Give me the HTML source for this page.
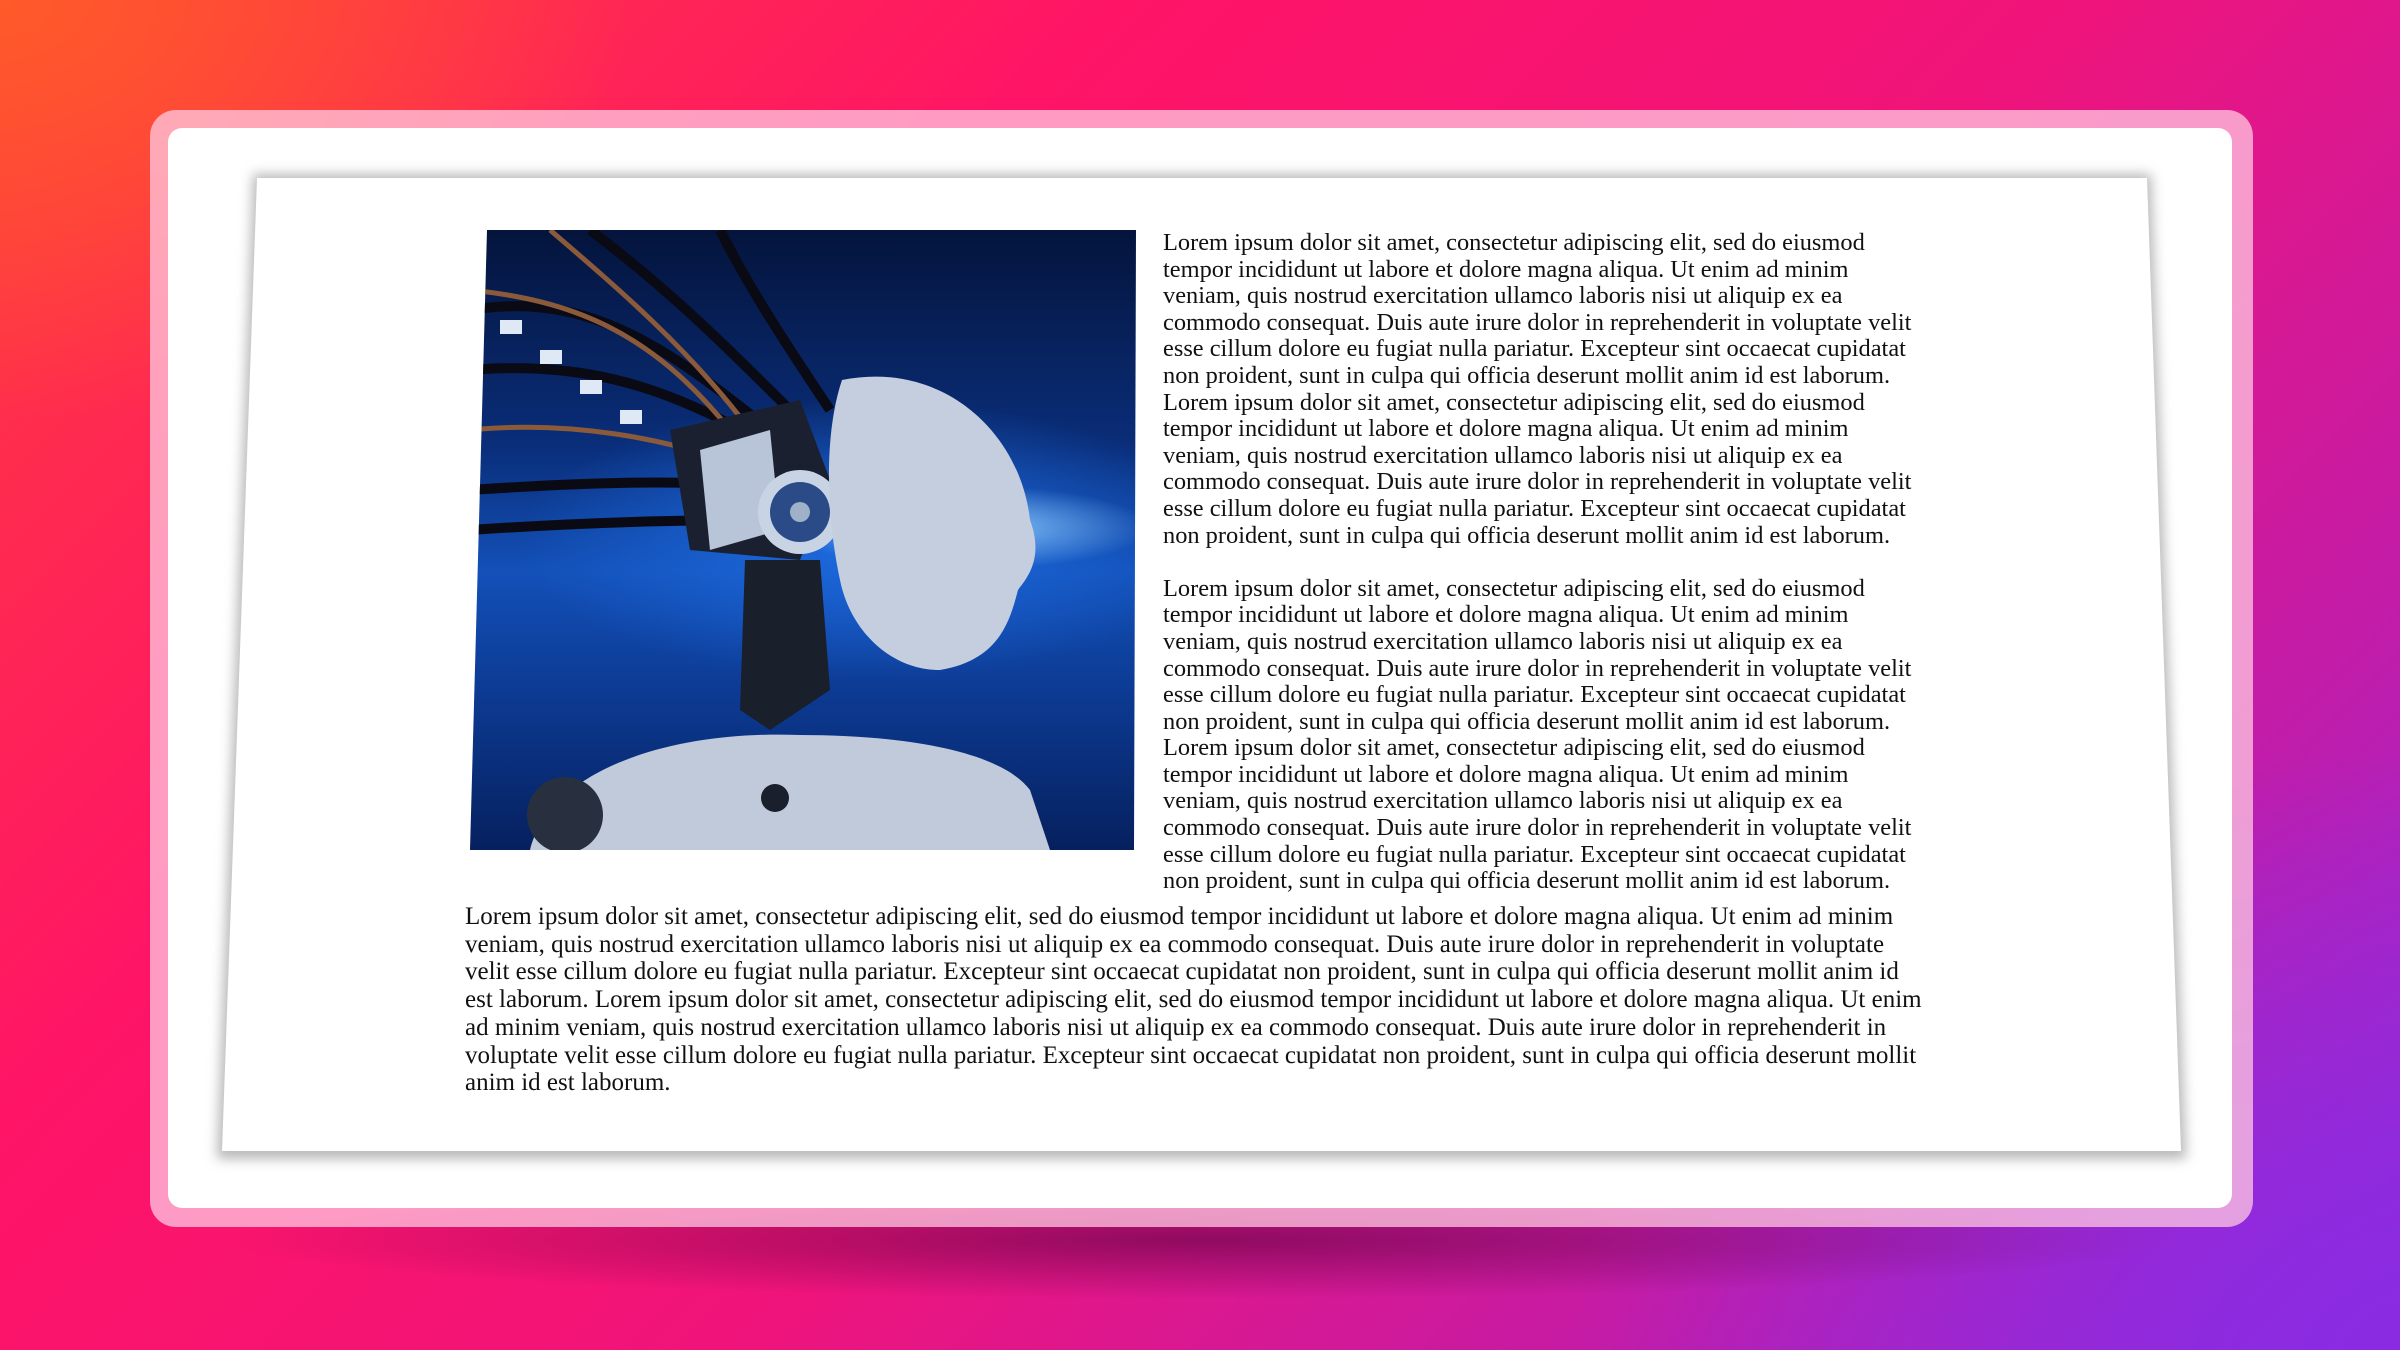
<!DOCTYPE html>
<html><head><meta charset="utf-8"><style>
html,body{margin:0;padding:0}
body{width:2400px;height:1350px;overflow:hidden;position:relative;
background:
radial-gradient(ellipse 900px 600px at 0% 0%,#ff5a2a 0%,rgba(255,60,60,0) 70%),
radial-gradient(ellipse 1100px 800px at 100% 100%,#8a2be2 0%,rgba(138,43,226,0) 75%),
linear-gradient(135deg,#ff3d3d 0%,#ff1466 30%,#f0147a 55%,#c21ca8 80%,#8e2ce0 100%);
font-family:"Liberation Serif",serif;}
.shadow{position:absolute;left:220px;top:1180px;width:1960px;height:120px;border-radius:50%;
background:radial-gradient(ellipse at center,rgba(80,0,60,.55),rgba(80,0,60,0) 70%);}
.frame{position:absolute;left:150px;top:110px;width:2103px;height:1117px;border-radius:26px;
background:rgba(255,200,225,.75);}
.inner{position:absolute;left:168px;top:128px;width:2064px;height:1080px;border-radius:14px;background:#fff;}
.pwrap{position:absolute;left:200px;top:170px;width:2000px;height:1000px;filter:blur(6px);}
.paper{position:absolute;left:0;top:0;width:2000px;height:1000px;background:#b8b8b8;
clip-path:polygon(53px 4px,1951px 4px,1986px 989px,17px 989px);}
.paperw{position:absolute;left:200px;top:170px;width:2000px;height:1000px;background:#fff;
clip-path:polygon(57px 8px,1947px 8px,1981px 981px,22px 981px);}
.img{position:absolute;left:470px;top:230px;width:666px;height:620px;
clip-path:polygon(17px 0,666px 0,664px 620px,0 620px);overflow:hidden;
background:
radial-gradient(ellipse 260px 60px at 75% 48%,rgba(150,210,255,.9),rgba(40,110,220,0) 70%),
radial-gradient(ellipse 500px 200px at 60% 50%,#1d6be0,rgba(20,80,200,0) 70%),
linear-gradient(180deg,#04143c 0%,#0a2e7a 35%,#1350b8 55%,#0c3a92 75%,#06205e 100%);}
.txt{position:absolute;color:#111;white-space:nowrap;}
.r{left:1163px;top:230px;line-height:26.6px;font-size:24.4px}
.b{left:465px;top:903px;line-height:27.7px;font-size:25px}
</style></head><body>
<div class="shadow"></div>
<div class="frame"></div>
<div class="inner"></div>
<div class="pwrap"><div class="paper"></div></div>
<div class="paperw"></div>
<div class="img">
<svg width="666" height="620" viewBox="0 0 666 620">
<g stroke="#0a0a14" stroke-width="10" fill="none">
<path d="M0 80 C120 60 200 120 300 200"/><path d="M0 140 C120 130 200 160 290 210"/>
<path d="M0 260 C150 250 250 250 300 260"/><path d="M0 300 C150 290 250 290 300 290"/>
<path d="M120 0 C200 60 260 120 330 190"/><path d="M250 0 C280 60 320 120 360 180"/>
</g>
<g stroke="#8a5a3a" stroke-width="5" fill="none">
<path d="M0 60 C100 70 180 100 260 200"/><path d="M0 200 C100 190 200 210 250 230"/><path d="M80 0 C150 60 220 120 280 200"/>
</g>
<g fill="#dfe8f5"><rect x="30" y="90" width="22" height="14"/><rect x="70" y="120" width="22" height="14"/><rect x="110" y="150" width="22" height="14"/><rect x="150" y="180" width="22" height="14"/></g>
<path d="M200 200 L330 170 L360 250 L330 330 L220 320 Z" fill="#1a2030"/>
<path d="M230 220 L300 200 L310 300 L240 320 Z" fill="#b8c4d8"/>
<circle cx="330" cy="282" r="42" fill="#c8d4e4"/><circle cx="330" cy="282" r="30" fill="#2a4a88"/><circle cx="330" cy="282" r="10" fill="#9fb0c8"/>
<path d="M275 330 L350 330 L360 460 L300 500 L270 480 Z" fill="#1a1f2c"/>
<path d="M372 150 C470 130 550 200 560 290 C575 330 555 350 548 360 C540 390 530 430 470 440 C420 440 380 400 370 350 C355 280 355 200 372 150 Z" fill="#c5cede"/>
<path d="M60 620 C80 540 200 500 330 505 C430 505 530 520 560 560 L580 620 Z" fill="#c0cadb"/>
<circle cx="95" cy="585" r="38" fill="#283040"/><circle cx="305" cy="568" r="14" fill="#1a1f2c"/>
</svg>
</div>
<div class="txt r">Lorem ipsum dolor sit amet, consectetur adipiscing elit, sed do eiusmod<br>tempor incididunt ut labore et dolore magna aliqua. Ut enim ad minim<br>veniam, quis nostrud exercitation ullamco laboris nisi ut aliquip ex ea<br>commodo consequat. Duis aute irure dolor in reprehenderit in voluptate velit<br>esse cillum dolore eu fugiat nulla pariatur. Excepteur sint occaecat cupidatat<br>non proident, sunt in culpa qui officia deserunt mollit anim id est laborum.<br>Lorem ipsum dolor sit amet, consectetur adipiscing elit, sed do eiusmod<br>tempor incididunt ut labore et dolore magna aliqua. Ut enim ad minim<br>veniam, quis nostrud exercitation ullamco laboris nisi ut aliquip ex ea<br>commodo consequat. Duis aute irure dolor in reprehenderit in voluptate velit<br>esse cillum dolore eu fugiat nulla pariatur. Excepteur sint occaecat cupidatat<br>non proident, sunt in culpa qui officia deserunt mollit anim id est laborum.<br>&nbsp;<br>Lorem ipsum dolor sit amet, consectetur adipiscing elit, sed do eiusmod<br>tempor incididunt ut labore et dolore magna aliqua. Ut enim ad minim<br>veniam, quis nostrud exercitation ullamco laboris nisi ut aliquip ex ea<br>commodo consequat. Duis aute irure dolor in reprehenderit in voluptate velit<br>esse cillum dolore eu fugiat nulla pariatur. Excepteur sint occaecat cupidatat<br>non proident, sunt in culpa qui officia deserunt mollit anim id est laborum.<br>Lorem ipsum dolor sit amet, consectetur adipiscing elit, sed do eiusmod<br>tempor incididunt ut labore et dolore magna aliqua. Ut enim ad minim<br>veniam, quis nostrud exercitation ullamco laboris nisi ut aliquip ex ea<br>commodo consequat. Duis aute irure dolor in reprehenderit in voluptate velit<br>esse cillum dolore eu fugiat nulla pariatur. Excepteur sint occaecat cupidatat<br>non proident, sunt in culpa qui officia deserunt mollit anim id est laborum.</div>
<div class="txt b">Lorem ipsum dolor sit amet, consectetur adipiscing elit, sed do eiusmod tempor incididunt ut labore et dolore magna aliqua. Ut enim ad minim<br>veniam, quis nostrud exercitation ullamco laboris nisi ut aliquip ex ea commodo consequat. Duis aute irure dolor in reprehenderit in voluptate<br>velit esse cillum dolore eu fugiat nulla pariatur. Excepteur sint occaecat cupidatat non proident, sunt in culpa qui officia deserunt mollit anim id<br>est laborum. Lorem ipsum dolor sit amet, consectetur adipiscing elit, sed do eiusmod tempor incididunt ut labore et dolore magna aliqua. Ut enim<br>ad minim veniam, quis nostrud exercitation ullamco laboris nisi ut aliquip ex ea commodo consequat. Duis aute irure dolor in reprehenderit in<br>voluptate velit esse cillum dolore eu fugiat nulla pariatur. Excepteur sint occaecat cupidatat non proident, sunt in culpa qui officia deserunt mollit<br>anim id est laborum.</div>
</body></html>
